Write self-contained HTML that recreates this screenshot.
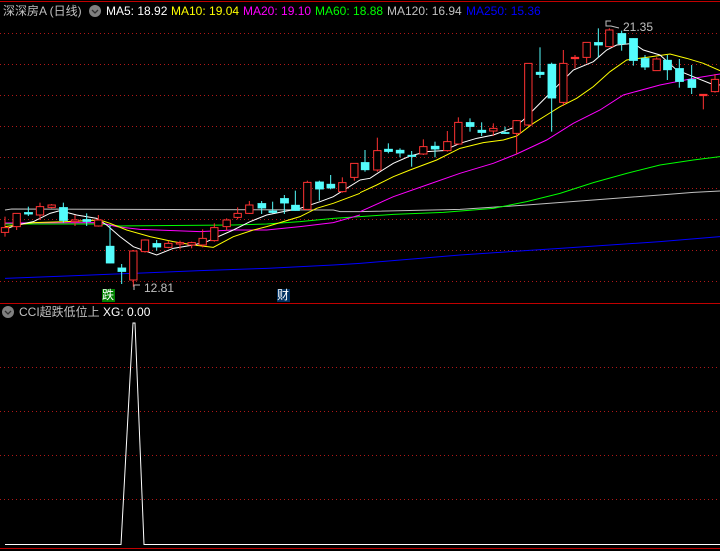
<!DOCTYPE html>
<html><head><meta charset="utf-8"><style>
html,body{margin:0;padding:0;background:#000;width:720px;height:551px;overflow:hidden}
body{position:relative;font-family:"Liberation Sans","Noto Sans CJK SC",sans-serif}
.t{position:absolute;font-size:12px;line-height:14px;white-space:nowrap}
svg{position:absolute;left:0;top:0}
</style></head><body>
<svg width="720" height="551">
<g stroke="#c00000" stroke-width="1">
<line x1="0" y1="1.5" x2="720" y2="1.5"/>
<line x1="0" y1="303.5" x2="720" y2="303.5"/>
<line x1="0" y1="548.5" x2="720" y2="548.5"/>
</g>
<g stroke="#b01818" stroke-width="1" stroke-dasharray="1,3">
<line x1="0" y1="33.5" x2="720" y2="33.5"/><line x1="0" y1="64.5" x2="720" y2="64.5"/>
<line x1="0" y1="95.5" x2="720" y2="95.5"/><line x1="0" y1="126.5" x2="720" y2="126.5"/>
<line x1="0" y1="157.5" x2="720" y2="157.5"/><line x1="0" y1="188.5" x2="720" y2="188.5"/>
<line x1="0" y1="219.5" x2="720" y2="219.5"/><line x1="0" y1="250.5" x2="720" y2="250.5"/>
<line x1="0" y1="281.5" x2="720" y2="281.5"/>
<line x1="0" y1="367.5" x2="720" y2="367.5"/><line x1="0" y1="411.5" x2="720" y2="411.5"/>
<line x1="0" y1="455.5" x2="720" y2="455.5"/><line x1="0" y1="499.5" x2="720" y2="499.5"/>
</g>
<!-- MA lines zoom1 -->
<g transform="scale(0.33333)" fill="none">
<polyline vector-effect="non-scaling-stroke" stroke="#0000ff" points="15,835 200,828 400,820 600,812 800,805 1000,795 1080,790"/>
<polyline vector-effect="non-scaling-stroke" stroke="#c0c0c0" points="15,630 35,627 1000,630 1020,635 1080,635"/>
<polyline vector-effect="non-scaling-stroke" stroke="#00ff00" points="15,672 300,672 360,678 700,675 800,672 900,665 1000,655 1080,650"/>
<polyline vector-effect="non-scaling-stroke" stroke="#ff00ff" points="15,669 300,668 350,680 420,688 600,695 700,690 800,690 900,680 1000,668 1080,645"/>
<polyline vector-effect="non-scaling-stroke" stroke="#ffff00" points="15,680 100,668 200,665 300,660 330,670 380,690 450,710 520,725 580,735 640,742 700,710 760,690 800,680 850,665 900,650 950,625 1000,610 1080,580"/>
<polyline vector-effect="non-scaling-stroke" stroke="#ffffff" points="15,688 50,675 100,665 150,640 180,632 230,645 290,655 320,675 360,710 400,740 470,765 520,745 580,735 620,725 700,690 750,665 800,645 850,635 900,625 960,605 1000,590 1040,565 1080,540"/>
</g>
<g transform="translate(360,0) scale(0.33333)" fill="none">
<polyline vector-effect="non-scaling-stroke" stroke="#0000ff" points="0,790 300,765 600,745 900,725 1080,710"/>
<polyline vector-effect="non-scaling-stroke" stroke="#c0c0c0" points="0,635 300,628 500,615 700,600 900,585 1000,577 1080,573"/>
<polyline vector-effect="non-scaling-stroke" stroke="#00ff00" points="0,650 100,643 250,637 400,625 500,605 600,580 700,548 800,520 900,495 1000,480 1080,470"/>
<polyline vector-effect="non-scaling-stroke" stroke="#ff00ff" points="0,635 100,590 200,555 300,520 400,490 470,462 560,420 640,370 720,330 790,285 900,255 1000,235 1080,222"/>
<polyline vector-effect="non-scaling-stroke" stroke="#ffff00" points="0,578 50,555 100,530 150,510 230,480 300,445 370,428 430,420 470,408 520,370 560,345 600,320 650,295 700,260 750,215 800,180 860,172 930,162 980,175 1030,190 1080,212"/>
<polyline vector-effect="non-scaling-stroke" stroke="#ffffff" points="0,540 30,535 60,515 100,490 150,468 200,455 250,452 300,430 350,415 400,405 460,383 490,360 520,330 560,290 600,250 640,210 700,185 740,150 770,135 820,130 850,150 900,165 950,210 1000,230 1050,250 1080,255"/>
</g>
<!-- candles zoom1 -->
<g transform="scale(0.33333)">
<g stroke="#ff3232" fill="#000">
<line vector-effect="non-scaling-stroke" x1="15" y1="650" x2="15" y2="710"/><rect vector-effect="non-scaling-stroke" x="4" y="683" width="22" height="14"/>
<line vector-effect="non-scaling-stroke" x1="50" y1="640" x2="50" y2="690"/><rect vector-effect="non-scaling-stroke" x="39" y="640" width="22" height="40"/>
<line vector-effect="non-scaling-stroke" x1="120" y1="608" x2="120" y2="660"/><rect vector-effect="non-scaling-stroke" x="109" y="620" width="22" height="25"/>
<line vector-effect="non-scaling-stroke" x1="155" y1="612" x2="155" y2="625"/><rect vector-effect="non-scaling-stroke" x="144" y="615" width="22" height="7"/>
<line vector-effect="non-scaling-stroke" x1="225" y1="645" x2="225" y2="678"/><rect vector-effect="non-scaling-stroke" x="214" y="660" width="22" height="5"/>
<line vector-effect="non-scaling-stroke" x1="295" y1="645" x2="295" y2="680"/><rect vector-effect="non-scaling-stroke" x="284" y="660" width="22" height="18"/>
<line vector-effect="non-scaling-stroke" x1="400" y1="750" x2="400" y2="860"/><rect vector-effect="non-scaling-stroke" x="389" y="753" width="22" height="87"/>
<line vector-effect="non-scaling-stroke" x1="435" y1="718" x2="435" y2="758"/><rect vector-effect="non-scaling-stroke" x="424" y="720" width="22" height="35"/>
<line vector-effect="non-scaling-stroke" x1="505" y1="722" x2="505" y2="745"/><rect vector-effect="non-scaling-stroke" x="494" y="730" width="22" height="12"/>
<line vector-effect="non-scaling-stroke" x1="540" y1="722" x2="540" y2="748"/><rect vector-effect="non-scaling-stroke" x="529" y="728" width="22" height="4"/>
<line vector-effect="non-scaling-stroke" x1="575" y1="725" x2="575" y2="745"/><rect vector-effect="non-scaling-stroke" x="564" y="728" width="22" height="7"/>
<line vector-effect="non-scaling-stroke" x1="608" y1="688" x2="608" y2="742"/><rect vector-effect="non-scaling-stroke" x="597" y="715" width="22" height="20"/>
<line vector-effect="non-scaling-stroke" x1="643" y1="670" x2="643" y2="725"/><rect vector-effect="non-scaling-stroke" x="632" y="683" width="22" height="39"/>
<line vector-effect="non-scaling-stroke" x1="680" y1="655" x2="680" y2="692"/><rect vector-effect="non-scaling-stroke" x="669" y="660" width="22" height="20"/>
<line vector-effect="non-scaling-stroke" x1="713" y1="622" x2="713" y2="658"/><rect vector-effect="non-scaling-stroke" x="702" y="640" width="22" height="12"/>
<line vector-effect="non-scaling-stroke" x1="748" y1="603" x2="748" y2="642"/><rect vector-effect="non-scaling-stroke" x="737" y="615" width="22" height="25"/>
<line vector-effect="non-scaling-stroke" x1="922" y1="542" x2="922" y2="630"/><rect vector-effect="non-scaling-stroke" x="911" y="547" width="22" height="81"/>
<line vector-effect="non-scaling-stroke" x1="1027" y1="532" x2="1027" y2="578"/><rect vector-effect="non-scaling-stroke" x="1016" y="548" width="22" height="27"/>
<line vector-effect="non-scaling-stroke" x1="1063" y1="490" x2="1063" y2="542"/><rect vector-effect="non-scaling-stroke" x="1052" y="490" width="22" height="42"/>
</g>
<g stroke="#54fcfc" fill="#54fcfc">
<line vector-effect="non-scaling-stroke" x1="85" y1="620" x2="85" y2="648"/><rect x="73" y="637" width="25" height="6"/>
<line vector-effect="non-scaling-stroke" x1="190" y1="608" x2="190" y2="668"/><rect x="178" y="622" width="25" height="40"/>
<line vector-effect="non-scaling-stroke" x1="260" y1="640" x2="260" y2="678"/><rect x="248" y="658" width="25" height="7"/>
<line vector-effect="non-scaling-stroke" x1="330" y1="675" x2="330" y2="790"/><rect x="318" y="738" width="25" height="52"/>
<line vector-effect="non-scaling-stroke" x1="365" y1="792" x2="365" y2="852"/><rect x="353" y="803" width="25" height="12"/>
<line vector-effect="non-scaling-stroke" x1="470" y1="720" x2="470" y2="752"/><rect x="458" y="730" width="25" height="12"/>
<line vector-effect="non-scaling-stroke" x1="785" y1="603" x2="785" y2="642"/><rect x="773" y="610" width="25" height="15"/>
<line vector-effect="non-scaling-stroke" x1="818" y1="605" x2="818" y2="640"/><rect x="806" y="632" width="25" height="6"/>
<line vector-effect="non-scaling-stroke" x1="853" y1="585" x2="853" y2="642"/><rect x="841" y="595" width="25" height="15"/>
<line vector-effect="non-scaling-stroke" x1="886" y1="572" x2="886" y2="632"/><rect x="874" y="615" width="25" height="17"/>
<line vector-effect="non-scaling-stroke" x1="958" y1="542" x2="958" y2="602"/><rect x="946" y="545" width="25" height="23"/>
<line vector-effect="non-scaling-stroke" x1="992" y1="525" x2="992" y2="568"/><rect x="980" y="552" width="25" height="13"/>
</g>
</g>
<!-- candles zoom2 -->
<g transform="translate(360,0) scale(0.33333)">
<g stroke="#ff3232" fill="#000">
<line vector-effect="non-scaling-stroke" x1="52" y1="413" x2="52" y2="515"/><rect vector-effect="non-scaling-stroke" x="41" y="452" width="22" height="58"/>
<line vector-effect="non-scaling-stroke" x1="190" y1="418" x2="190" y2="465"/><rect vector-effect="non-scaling-stroke" x="179" y="440" width="22" height="22"/>
<line vector-effect="non-scaling-stroke" x1="262" y1="393" x2="262" y2="455"/><rect vector-effect="non-scaling-stroke" x="251" y="425" width="22" height="27"/>
<line vector-effect="non-scaling-stroke" x1="295" y1="352" x2="295" y2="435"/><rect vector-effect="non-scaling-stroke" x="284" y="367" width="22" height="65"/>
<line vector-effect="non-scaling-stroke" x1="400" y1="370" x2="400" y2="408"/><rect vector-effect="non-scaling-stroke" x="389" y="385" width="22" height="8"/>
<line vector-effect="non-scaling-stroke" x1="470" y1="360" x2="470" y2="462"/><rect vector-effect="non-scaling-stroke" x="459" y="362" width="22" height="38"/>
<line vector-effect="non-scaling-stroke" x1="505" y1="190" x2="505" y2="378"/><rect vector-effect="non-scaling-stroke" x="494" y="190" width="22" height="185"/>
<line vector-effect="non-scaling-stroke" x1="610" y1="150" x2="610" y2="318"/><rect vector-effect="non-scaling-stroke" x="599" y="190" width="22" height="117"/>
<line vector-effect="non-scaling-stroke" x1="645" y1="165" x2="645" y2="205"/><rect vector-effect="non-scaling-stroke" x="634" y="172" width="22" height="4" fill="#ff3232"/>
<line vector-effect="non-scaling-stroke" x1="680" y1="127" x2="680" y2="190"/><rect vector-effect="non-scaling-stroke" x="669" y="127" width="22" height="45"/>
<line vector-effect="non-scaling-stroke" x1="748" y1="85" x2="748" y2="142"/><rect vector-effect="non-scaling-stroke" x="737" y="90" width="22" height="50"/>
<line vector-effect="non-scaling-stroke" x1="890" y1="172" x2="890" y2="212"/><rect vector-effect="non-scaling-stroke" x="879" y="177" width="22" height="35"/>
<line vector-effect="non-scaling-stroke" x1="1030" y1="282" x2="1030" y2="328"/><rect vector-effect="non-scaling-stroke" x="1019" y="283" width="22" height="4" fill="#ff3232"/>
<line vector-effect="non-scaling-stroke" x1="1065" y1="222" x2="1065" y2="278"/><rect vector-effect="non-scaling-stroke" x="1054" y="238" width="22" height="37"/>
</g>
<g stroke="#54fcfc" fill="#54fcfc">
<line vector-effect="non-scaling-stroke" x1="15" y1="450" x2="15" y2="515"/><rect x="3" y="487" width="25" height="23"/>
<line vector-effect="non-scaling-stroke" x1="85" y1="430" x2="85" y2="460"/><rect x="73" y="447" width="25" height="8"/>
<line vector-effect="non-scaling-stroke" x1="120" y1="445" x2="120" y2="472"/><rect x="108" y="450" width="25" height="10"/>
<line vector-effect="non-scaling-stroke" x1="155" y1="453" x2="155" y2="500"/><rect x="143" y="465" width="25" height="5"/>
<line vector-effect="non-scaling-stroke" x1="225" y1="425" x2="225" y2="472"/><rect x="213" y="438" width="25" height="10"/>
<line vector-effect="non-scaling-stroke" x1="330" y1="355" x2="330" y2="395"/><rect x="318" y="367" width="25" height="13"/>
<line vector-effect="non-scaling-stroke" x1="365" y1="367" x2="365" y2="408"/><rect x="353" y="390" width="25" height="8"/>
<line vector-effect="non-scaling-stroke" x1="435" y1="380" x2="435" y2="402"/><rect x="423" y="397" width="25" height="4"/>
<line vector-effect="non-scaling-stroke" x1="540" y1="142" x2="540" y2="234"/><rect x="528" y="216" width="25" height="8"/>
<line vector-effect="non-scaling-stroke" x1="575" y1="188" x2="575" y2="395"/><rect x="563" y="192" width="25" height="103"/>
<line vector-effect="non-scaling-stroke" x1="715" y1="85" x2="715" y2="172"/><rect x="703" y="127" width="25" height="9"/>
<line vector-effect="non-scaling-stroke" x1="785" y1="92" x2="785" y2="152"/><rect x="773" y="100" width="25" height="32"/>
<line vector-effect="non-scaling-stroke" x1="820" y1="115" x2="820" y2="197"/><rect x="808" y="115" width="25" height="67"/>
<line vector-effect="non-scaling-stroke" x1="855" y1="165" x2="855" y2="210"/><rect x="843" y="175" width="25" height="27"/>
<line vector-effect="non-scaling-stroke" x1="922" y1="165" x2="922" y2="240"/><rect x="910" y="180" width="25" height="30"/>
<line vector-effect="non-scaling-stroke" x1="958" y1="177" x2="958" y2="263"/><rect x="946" y="205" width="25" height="40"/>
<line vector-effect="non-scaling-stroke" x1="995" y1="195" x2="995" y2="282"/><rect x="983" y="238" width="25" height="25"/>
</g>
</g>
<!-- annotations -->
<g stroke="#c0c0c0" fill="none">
<polyline points="140,285 134,285 134,290"/>
<polyline points="611,21 606,21 606,26 611,26 619,28"/>
</g>
<rect x="102" y="289" width="13" height="13" fill="#008000"/>
<rect x="277" y="289" width="13" height="13" fill="#003060"/>
<!-- indicator -->
<polyline fill="none" stroke="#fff" stroke-width="1" points="5,544.5 121,544.5 133,323 135,323 144,544.5 720,544.5"/>
<circle cx="95" cy="11" r="6" fill="#808080"/>
<polyline points="92,10 95,13 98,10" fill="none" stroke="#303030" stroke-width="1.3"/>
<circle cx="8" cy="312" r="6" fill="#808080"/>
<polyline points="5,311 8,314 11,311" fill="none" stroke="#303030" stroke-width="1.3"/>
</svg>
<div class="t" style="left:3px;top:4px;color:#c0c0c0">深深房A (日线)</div>
<div class="t" style="left:106px;top:4px;color:#fff">MA5: 18.92</div>
<div class="t" style="left:171px;top:4px;color:#ffff00">MA10: 19.04</div>
<div class="t" style="left:243px;top:4px;color:#ff00ff">MA20: 19.10</div>
<div class="t" style="left:315px;top:4px;color:#00ff00">MA60: 18.88</div>
<div class="t" style="left:387px;top:4px;color:#c0c0c0">MA120: 16.94</div>
<div class="t" style="left:466px;top:4px;color:#0000ff">MA250: 15.36</div>
<div class="t" style="left:144px;top:281px;color:#c0c0c0">12.81</div>
<div class="t" style="left:623px;top:20px;color:#c0c0c0">21.35</div>
<div class="t" style="left:102px;top:288px;color:#fff;font-size:12px">跌</div>
<div class="t" style="left:277px;top:288px;color:#fff;font-size:12px">财</div>
<div class="t" style="left:19px;top:305px;color:#c0c0c0">CCI超跌低位上 <span style="color:#fff">XG: 0.00</span></div>
</body></html>
